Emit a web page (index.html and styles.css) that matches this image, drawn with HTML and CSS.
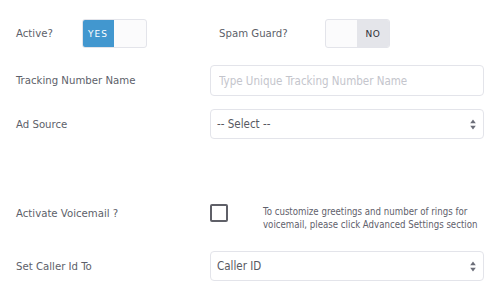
FILE: index.html
```html
<!DOCTYPE html>
<html>
<head>
<meta charset="utf-8">
<link rel="stylesheet" href="styles.css">
</head>
<body>
<form class="form">
  <div class="row row-switches">
    <span class="label label-active">Active?</span>
    <div class="switch on"><span class="knob-yes">YES</span><span class="blank"></span></div>
    <span class="label label-spam">Spam Guard?</span>
    <div class="switch off"><span class="blank"></span><span class="knob-no">NO</span></div>
  </div>
  <div class="row row-name">
    <span class="label">Tracking Number Name</span>
    <input class="control" type="text" placeholder="Type Unique Tracking Number Name">
  </div>
  <div class="row row-source">
    <span class="label">Ad Source</span>
    <div class="select-wrap">
      <select class="control select"><option>-- Select --</option></select>
      <svg class="arrows" width="6" height="11" viewBox="0 0 6 11"><path d="M3 0.5 L5.8 4.2 H0.2 Z M3 10.5 L5.8 6.8 H0.2 Z" fill="#6b6d78"/></svg>
    </div>
  </div>
  <div class="row row-voicemail">
    <span class="label">Activate Voicemail ?</span>
    <div class="vm">
      <span class="checkbox"></span>
      <p class="help">To customize greetings and number of rings for<br>voicemail, please click Advanced Settings section</p>
    </div>
  </div>
  <div class="row row-caller">
    <span class="label">Set Caller Id To</span>
    <div class="select-wrap">
      <select class="control select"><option>Caller ID</option></select>
      <svg class="arrows" width="6" height="11" viewBox="0 0 6 11"><path d="M3 0.5 L5.8 4.2 H0.2 Z M3 10.5 L5.8 6.8 H0.2 Z" fill="#6b6d78"/></svg>
    </div>
  </div>
</form>
</body>
</html>
```
FILE: styles.css
```css
html, body {
  margin: 0;
  padding: 0;
  background: #ffffff;
}
body {
  width: 500px;
  height: 299px;
  overflow: hidden;
  font-family: "DejaVu Sans Condensed", "DejaVu Sans", sans-serif;
  font-stretch: condensed;
  font-size: 11.3px;
  color: #5d5f6a;
}
.form {
  padding: 19px 16px 0 16px;
  display: flex;
  flex-direction: column;
}
.row {
  display: grid;
  grid-template-columns: 194px 274px;
  align-items: center;
}
.label {
  font-size: 11.3px;
}
.row-switches {
  display: flex;
  align-items: center;
  height: 29px;
}
.label-active {
  width: 66px;
}
.label-spam {
  margin-left: 72px;
  width: 106px;
}
.switch {
  display: flex;
  width: 65px;
  height: 29px;
  box-sizing: border-box;
  border: 1px solid #e3e4ea;
  border-radius: 3px;
  overflow: hidden;
  background: #fbfbfc;
}
.switch span {
  display: flex;
  align-items: center;
  justify-content: center;
}
.knob-yes {
  width: 32px;
  background: #4297cf;
  color: #ffffff;
  font-family: "DejaVu Sans", sans-serif;
  font-stretch: normal;
  font-weight: normal;
  font-size: 9px;
  letter-spacing: 1px;
  margin: -1px 0 -1px -1px;
}
.knob-no {
  width: 32px;
  background: #e4e5ea;
  color: #2f3038;
  font-family: "DejaVu Sans", sans-serif;
  font-stretch: normal;
  font-weight: normal;
  font-size: 9px;
  letter-spacing: 0.5px;
}
.blank {
  flex: 1;
}
.row-name {
  margin-top: 17px;
}
.row-source {
  margin-top: 13px;
}
.row-voicemail {
  margin-top: 65px;
  align-items: start;
}
.row-voicemail .label {
  margin-top: 3px;
}
.row-caller {
  margin-top: 20px;
}
.control {
  box-sizing: border-box;
  width: 274px;
  border: 1px solid #e3e4ea;
  border-radius: 4px;
  background: #ffffff;
  font-family: "DejaVu Sans Condensed", "DejaVu Sans", sans-serif;
  font-stretch: condensed;
  font-size: 11.5px;
  color: #575962;
  outline: none;
  margin: 0;
}
input.control {
  height: 31px;
  padding: 0 8px;
}
input.control::placeholder {
  color: #c4c5cc;
}
.select-wrap {
  position: relative;
  width: 274px;
  height: 30px;
}
.select {
  appearance: none;
  -webkit-appearance: none;
  height: 30px;
  padding: 0 6px;
}
.arrows {
  position: absolute;
  right: 8px;
  top: 10px;
}
.vm {
  display: flex;
  align-items: flex-start;
}
.checkbox {
  flex: none;
  width: 18px;
  height: 18px;
  box-sizing: border-box;
  border: 2px solid #5f6068;
  border-radius: 2px;
}
.help {
  margin: 1px 0 0 35px;
  font-size: 9.6px;
  line-height: 13px;
  color: #5f616c;
  white-space: nowrap;
}
```
